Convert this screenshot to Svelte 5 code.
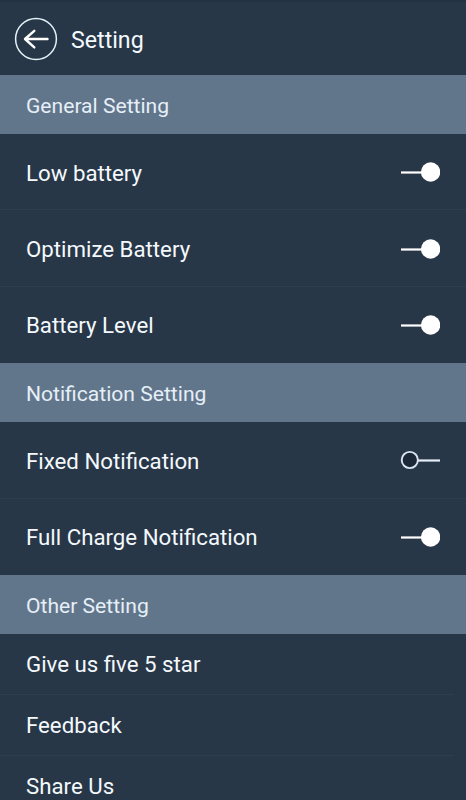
<script lang="ts">
	interface Item {
		label: string;
		on?: boolean;
	}

	interface Section {
		title: string;
		compact?: boolean;
		items: Item[];
	}

	let sections = $state<Section[]>([
		{
			title: 'General Setting',
			items: [
				{ label: 'Low battery', on: true },
				{ label: 'Optimize Battery', on: true },
				{ label: 'Battery Level', on: true }
			]
		},
		{
			title: 'Notification Setting',
			items: [
				{ label: 'Fixed Notification', on: false },
				{ label: 'Full Charge Notification', on: true }
			]
		},
		{
			title: 'Other Setting',
			compact: true,
			items: [{ label: 'Give us five 5 star' }, { label: 'Feedback' }, { label: 'Share Us' }]
		}
	]);
</script>

<div class="screen">
	<header class="header">
		<button class="back" aria-label="Back">
			<svg viewBox="0 0 44 44" width="44" height="44" fill="none" stroke="#fff">
				<circle cx="22" cy="22" r="20.4" stroke="#e4f3f8" stroke-width="1.5" />
				<path d="M20.3 13.8 L11 22 L20.3 30.4 M11.5 22 H33.5" stroke-width="2.4" stroke-linecap="round" stroke-linejoin="round" />
			</svg>
		</button>
		<h1>Setting</h1>
	</header>

	{#each sections as section}
		<section>
			<h2>{section.title}</h2>
			<div class="items" class:compact={section.compact}>
				{#each section.items as item}
					<div class="row">
						<span class="label">{item.label}</span>
						{#if item.on !== undefined}
							<button class="toggle" role="switch" aria-checked={item.on} aria-label={item.label} onclick={() => (item.on = !item.on)}>
								<svg viewBox="0 0 40 22" width="40" height="22">
									{#if item.on}
										<path d="M1 11.5 H24" stroke="#fff" stroke-width="2.2" />
										<circle cx="30.6" cy="11" r="9.7" fill="#fff" />
									{:else}
										<path d="M18 11.5 H40" stroke="#e4edf8" stroke-width="2.2" />
										<circle cx="9.8" cy="11" r="8.1" fill="#1c2737" stroke="#dbe5f2" stroke-width="1.9" />
									{/if}
								</svg>
							</button>
						{/if}
					</div>
				{/each}
			</div>
		</section>
	{/each}
</div>

<style>
	:global(body) {
		background: #283747;
		overflow: hidden;
	}

	.screen {
		height: 800px;
		overflow: hidden;
		background: #283747;
		color: #f4f9fd;
		font-family: Roboto, 'Liberation Sans', sans-serif;
	}

	.header {
		display: flex;
		align-items: center;
		gap: 13px;
		height: 75px;
		box-sizing: border-box;
		padding: 1px 14px 0;
		border-top: 2px solid #233240;
	}

	h1,
	h2 {
		margin: 0;
		font-weight: 400;
	}

	h1 {
		padding-top: 1px;
		font-size: 23.2px;
	}

	h2 {
		display: flex;
		align-items: center;
		height: 59px;
		box-sizing: border-box;
		padding: 2px 26px 0;
		background: #62768b;
		color: #e6eff8;
		font-size: 21.1px;
	}

	button {
		display: block;
		padding: 0;
		border: none;
		background: none;
		cursor: pointer;
	}

	svg {
		display: block;
	}

	.row {
		display: flex;
		align-items: center;
		justify-content: space-between;
		height: 76.4px;
		box-sizing: border-box;
		padding: 1px 26px 0;
		border-bottom: 1px solid #2e3e4d;
		font-size: 22.25px;
	}
	.row:last-child {
		border-bottom-color: transparent;
	}

	.label {
		padding-top: 1px;
	}

	.compact .row {
		height: 61px;
		margin-right: 12px;
		padding-top: 0;
	}
</style>
